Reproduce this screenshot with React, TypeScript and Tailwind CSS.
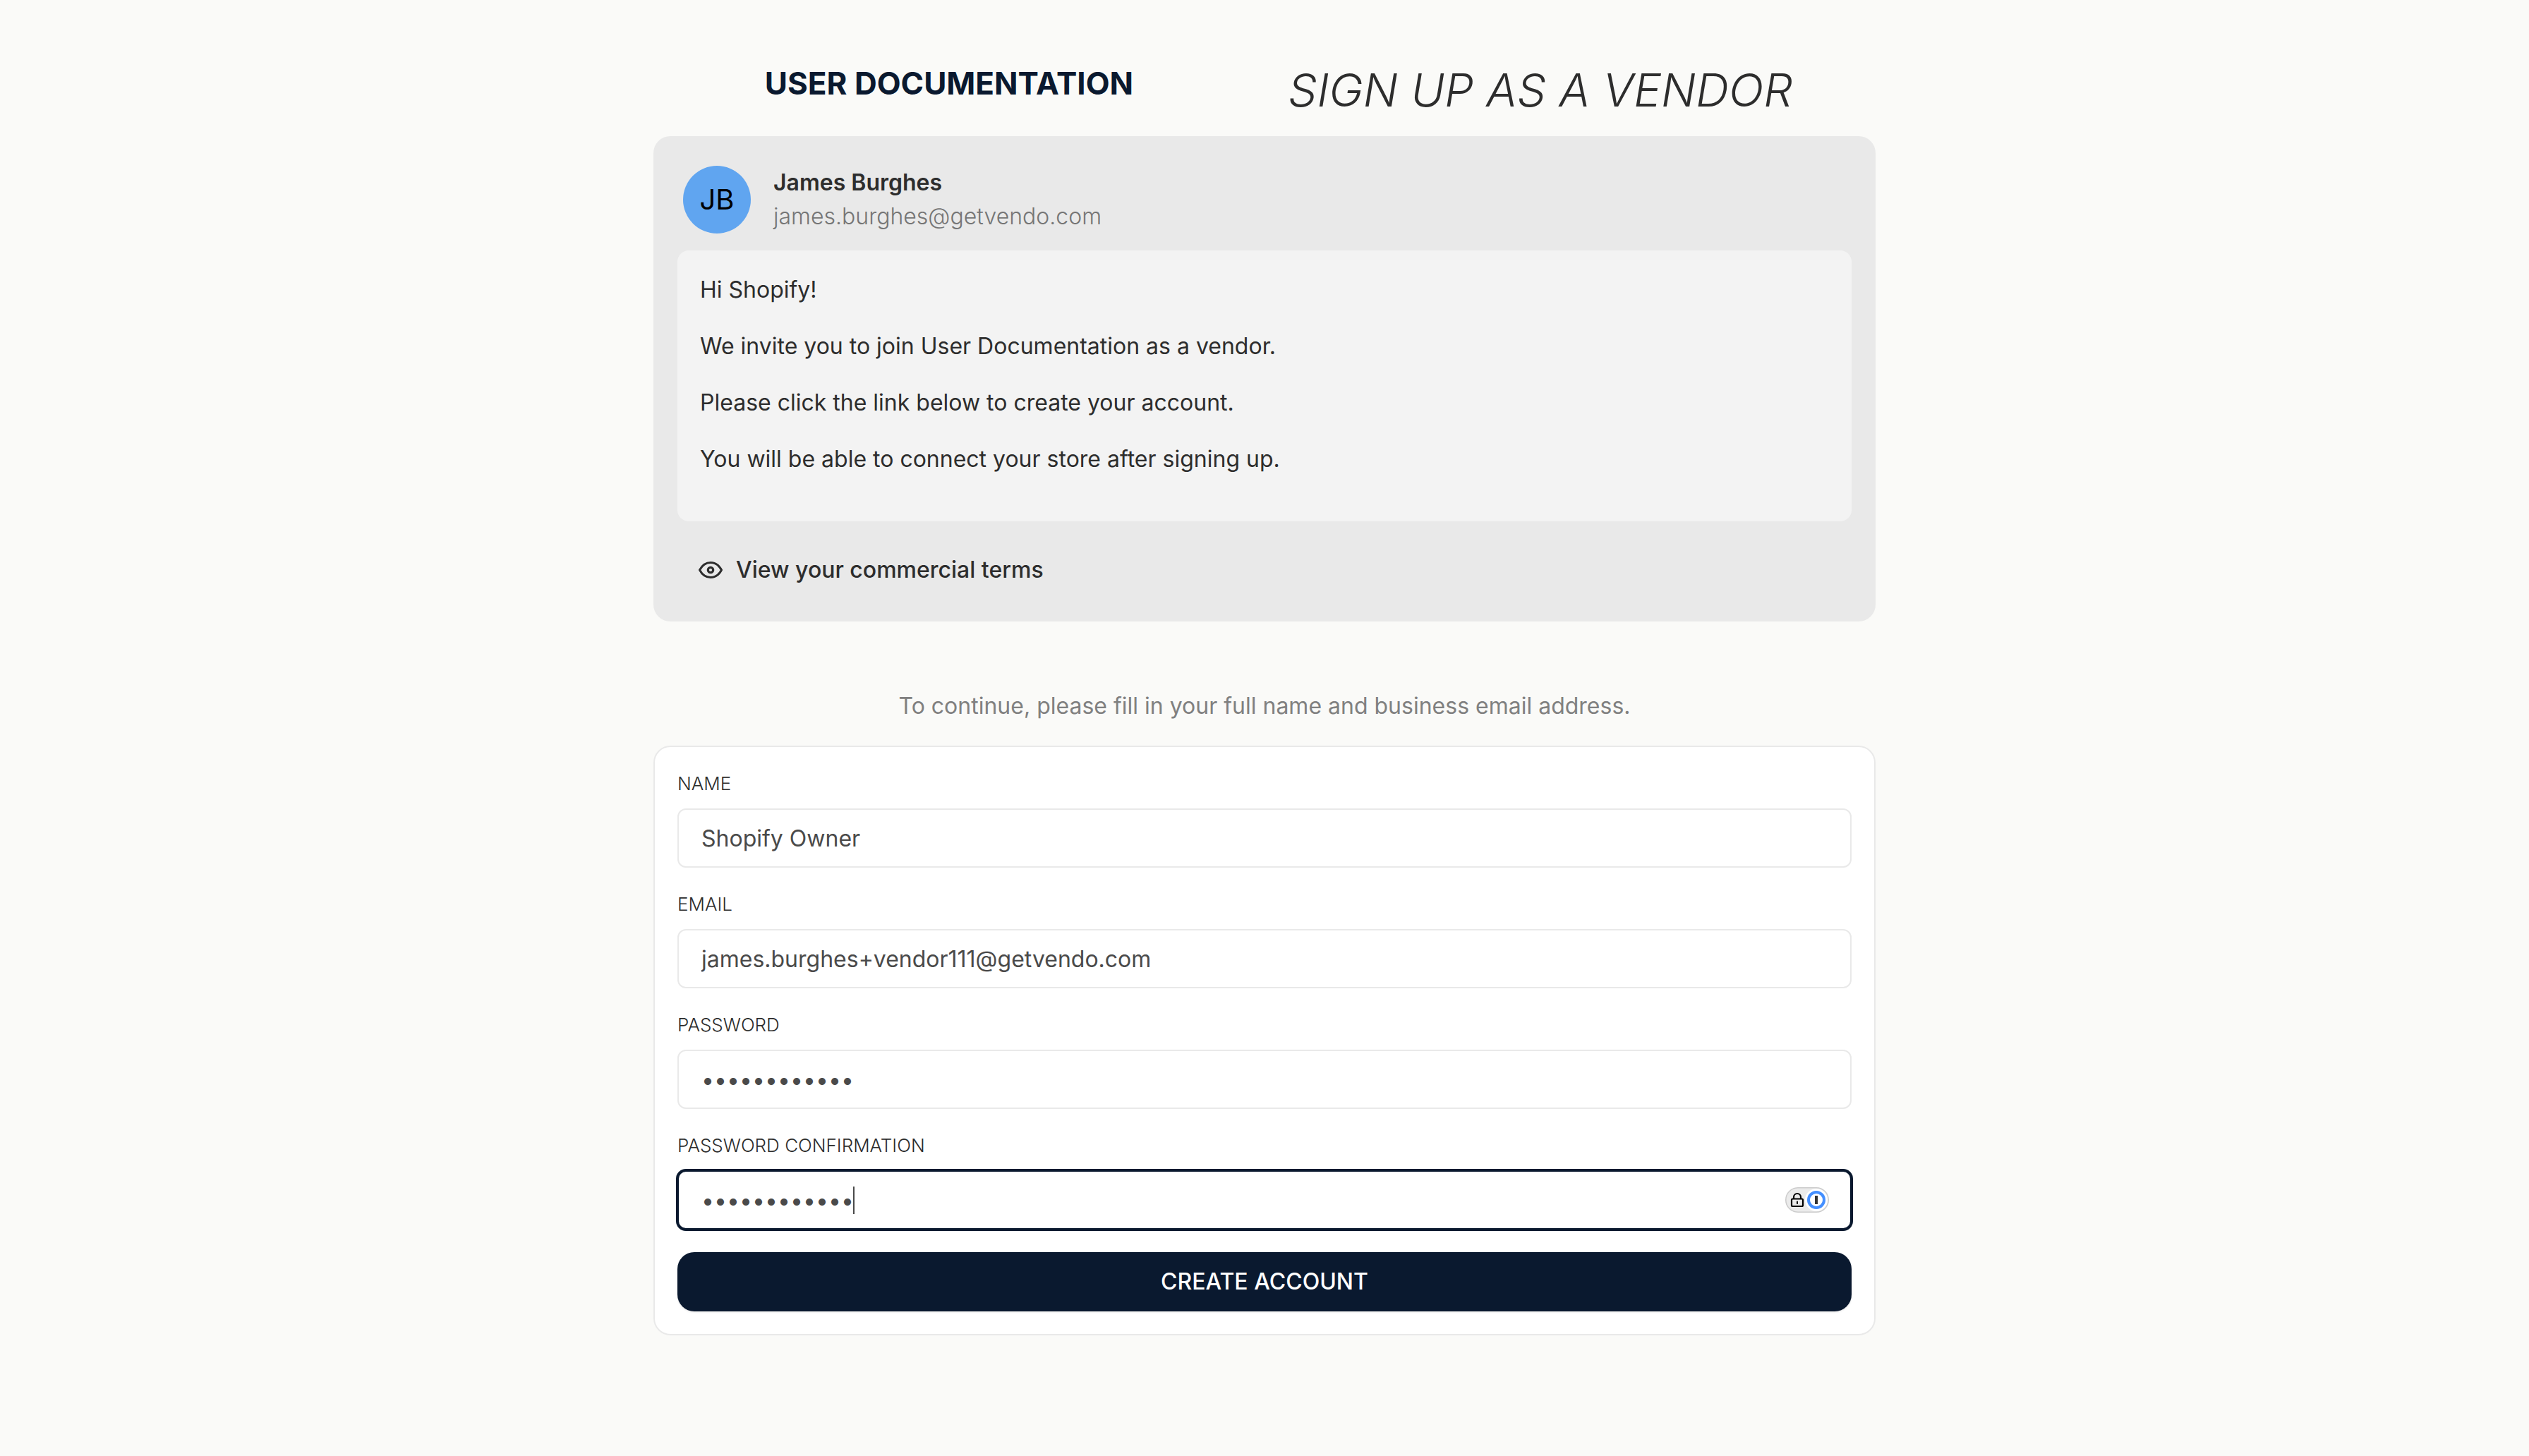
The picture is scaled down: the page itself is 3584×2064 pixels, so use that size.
import React from "react";

const inputBase =
  "block h-[84px] w-full rounded-xl bg-white px-[34px] text-[32px] text-[#4a4a4a]";
const idleOutline = "outline-2 -outline-offset-2 outline-[#e9e9e9]";
const activeOutline = "outline-4 -outline-offset-2 outline-[#0a192f]";

function Field({ id, label, children }: { id: string; label: string; children: React.ReactNode }) {
  return (
    <div>
      <label htmlFor={id} className="mb-4 block text-[26px] leading-[39px] font-light uppercase">
        {label}
      </label>
      {children}
    </div>
  );
}

function EyeIcon() {
  return (
    <svg viewBox="0 0 36 36" className="size-9" fill="none" stroke="currentColor" strokeWidth="3" aria-hidden="true">
      <path d="M2.500 18C6 11.500 11 7.500 18 7.500S30 11.500 33.500 18C30 24.500 25 28.500 18 28.500S6 24.500 2.500 18Z" strokeLinejoin="round" />
      <circle cx="18" cy="18" r="3.700" strokeWidth="3.200" />
    </svg>
  );
}

function PasswordManagerBadge() {
  return (
    <svg viewBox="0 0 62 36" className="h-9 w-[62px]" fill="none" aria-hidden="true">
      <rect x="0.750" y="0.750" width="60.500" height="34.500" rx="17.250" fill="#ebebeb" stroke="#cccccc" strokeWidth="1.500" />
      <circle cx="44" cy="18" r="16" fill="#fff" />
      <path d="M12 16.500V14a5 5 0 0 1 10 0v2.500" stroke="#000" strokeWidth="2.200" />
      <rect x="9" y="16.500" width="16" height="10.500" rx="1.500" stroke="#000" strokeWidth="2.200" />
      <rect x="16" y="19.500" width="2" height="4.500" rx="1" fill="#000" />
      <circle cx="44" cy="18" r="11" stroke="#448fff" strokeWidth="4" />
      <rect x="42" y="12" width="4" height="12" fill="#333" />
    </svg>
  );
}

const message = [
  "Hi Shopify!",
  "We invite you to join User Documentation as a vendor.",
  "Please click the link below to create your account.",
  "You will be able to connect your store after signing up.",
];

export default function App() {
  return (
    <main className="min-h-screen bg-[#fafaf8] px-8 pt-20 pb-32 font-['Inter',sans-serif] text-[32px] leading-[48px] text-[#2d2d2d]">
      <div className="mx-auto flex max-w-[1732px] flex-col">
        <header className="grid grid-cols-2 items-start pr-14 pb-[17px] text-center">
          <div className="text-[44px] leading-[76px] font-bold text-[#0a192f]">USER DOCUMENTATION</div>
          <h1 className="text-[65px] leading-[96px] font-light italic">SIGN UP AS A VENDOR</h1>
        </header>

        <section className="flex flex-col rounded-3xl bg-[#e9e9e9] px-[34px] pt-[42px] pb-8">
          <div className="flex items-center gap-8 pl-2">
            <div className="flex size-24 items-center justify-center rounded-full bg-[#60a5f0] text-[40px] text-black">JB</div>
            <div>
              <p className="font-semibold">James Burghes</p>
              <p className="font-light text-[#757575]">james.burghes@getvendo.com</p>
            </div>
          </div>
          <div className="mt-6 flex flex-col gap-8 rounded-2xl bg-[#f3f3f3] px-8 pt-8 pb-16">
            {message.map((line) => (
              <p key={line}>{line}</p>
            ))}
          </div>
          <button type="button" className="mt-7 flex h-[82px] items-center gap-[18px] self-start px-[29px] font-medium">
            <EyeIcon />
            View your commercial terms
          </button>
        </section>

        <p className="pt-24 pb-8 text-center text-[#808080]">
          To continue, please fill in your full name and business email address.
        </p>

        <form className="flex flex-col gap-8 rounded-3xl border-2 border-[#e9e9e9] bg-white p-8" onSubmit={(e) => e.preventDefault()}>
          <Field id="name" label="Name">
            <input id="name" type="text" defaultValue="Shopify Owner" className={`${inputBase} ${idleOutline}`} />
          </Field>
          <Field id="email" label="Email">
            <input id="email" type="email" defaultValue="james.burghes+vendor111@getvendo.com" className={`${inputBase} ${idleOutline}`} />
          </Field>
          <Field id="password" label="Password">
            <input id="password" type="password" defaultValue="vendorsecret" className={`${inputBase} ${idleOutline}`} />
          </Field>
          <Field id="confirmation" label="Password confirmation">
            <div className="relative">
              <input id="confirmation" type="password" defaultValue="vendorsecret" className={`${inputBase} ${activeOutline}`} />
              <span aria-hidden="true" className="absolute top-[23px] left-[249px] h-[39px] w-0.5 bg-[#4a4a4a]" />
              <span className="absolute top-1/2 right-8 flex -translate-y-1/2">
                <PasswordManagerBadge />
              </span>
            </div>
          </Field>
          <button type="submit" className="h-[84px] rounded-3xl bg-[#0a192f] font-medium text-white uppercase shadow-sm">
            Create account
          </button>
        </form>
      </div>
    </main>
  );
}
